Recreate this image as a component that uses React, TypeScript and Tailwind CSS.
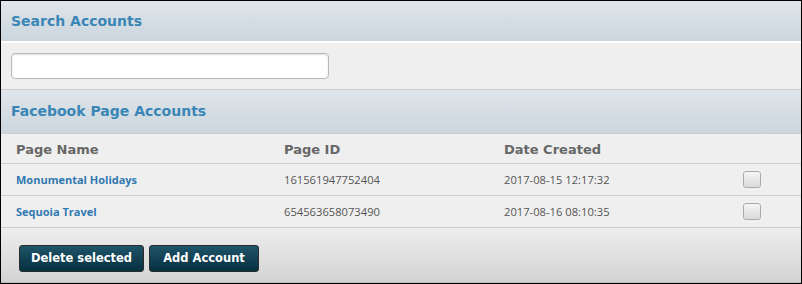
const rows = [
  { name: 'Monumental Holidays', id: '161561947752404', created: '2017-08-15 12:17:32' },
  { name: 'Sequoia Travel', id: '654563658073490', created: '2017-08-16 08:10:35' },
]

const heading = "font-['DejaVu_Sans',Verdana,sans-serif] font-bold"
const body = "font-['Open_Sans','Noto_Sans',sans-serif]"

function SectionTitle({ children, className }: { children: React.ReactNode; className: string }) {
  return (
    <div className={`${className} flex items-center px-[10px] bg-gradient-to-b from-[#dfe5ea] to-[#cbd6de]`}>
      <h2 className={`${heading} text-[14px] text-[#3a86b6]`}>{children}</h2>
    </div>
  )
}

function Checkbox() {
  return (
    <span className="block w-[18px] h-[17px] rounded-[3px] border border-[#a9a9a9] bg-gradient-to-b from-[#f6f6f6] to-[#d9d9d9] shadow-[inset_0_0_1px_#fff]" />
  )
}

export default function App() {
  return (
    <div className="w-[802px] h-[284px] border border-black bg-[#efefef] flex flex-col overflow-hidden">
      <SectionTitle className="h-[42px] border-b-2 border-white">Search Accounts</SectionTitle>

      <div className="h-[47px] pt-[10px] pl-[10px] border-b border-[#cccccc]">
        <input
          type="text"
          className="block w-[318px] h-[26px] rounded-[4px] bg-white border border-[#b9b9b9] shadow-[inset_0_1px_2px_rgba(0,0,0,0.12)] outline-none"
        />
      </div>

      <SectionTitle className="h-[44px] border-b border-[#c9ced2]">Facebook Page Accounts</SectionTitle>

      <div className={`h-[30px] grid grid-cols-[268px_220px_239px_auto] items-center pl-[15px] pt-[2px] border-b border-[#cccccc] ${heading} text-[13px] text-[#676767]`}>
        <span>Page Name</span>
        <span>Page ID</span>
        <span>Date Created</span>
        <span />
      </div>

      {rows.map((r) => (
        <div
          key={r.id}
          className={`h-[32px] grid grid-cols-[268px_220px_239px_auto] items-center pl-[15px] border-b border-[#cccccc] ${body} text-[11.2px] text-[#555555]`}
        >
          <a href="#" className="font-bold text-[11px] text-[#3079b0] pt-[2px]">{r.name}</a>
          <span className="pt-[2px]">{r.id}</span>
          <span className="pt-[2px]">{r.created}</span>
          <Checkbox />
        </div>
      ))}

      <div className="flex-1 flex gap-[5px] items-start pt-[17px] pl-[18px] bg-gradient-to-b from-[#ededed] to-[#d3d3d3] border-b border-[#bdbdbd]">
        <button className={`w-[125px] h-[27px] rounded-[3px] border border-[#2a2a2a] bg-gradient-to-b from-[#1f5469] to-[#06303f] text-white ${heading} text-[11.5px]`}>
          Delete selected
        </button>
        <button className={`w-[110px] h-[27px] rounded-[3px] border border-[#2a2a2a] bg-gradient-to-b from-[#1f5469] to-[#06303f] text-white ${heading} text-[11.5px]`}>
          Add Account
        </button>
      </div>
    </div>
  )
}
